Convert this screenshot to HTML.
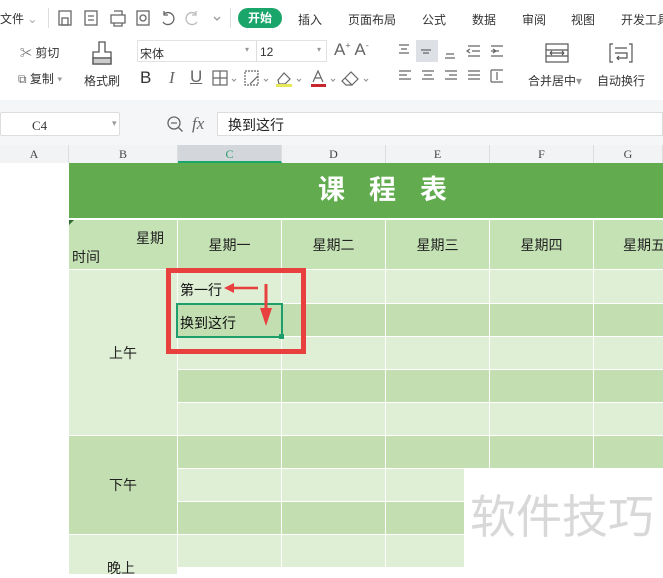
<!DOCTYPE html>
<html><head><meta charset="utf-8"><style>
*{margin:0;padding:0;box-sizing:border-box}
body{width:663px;height:567px;overflow:hidden;background:#fff;font-family:"Liberation Sans","Noto Sans CJK SC",sans-serif;position:relative;color:#333}
.a{position:absolute}
.t{font-size:12px;color:#333;white-space:nowrap}
.ic{position:absolute;font-size:15px;color:#666;white-space:nowrap;font-weight:300}
.cell{position:absolute;border-right:1px solid #fff;border-bottom:1px solid #fff}
.L{background:#deefd5}.D{background:#c3dfb1}.H{background:#c5e2b5}
.ch{position:absolute;top:145px;height:18px;font-family:"Liberation Serif","Noto Serif CJK SC",serif;font-size:12px;color:#444;text-align:center;line-height:18px;border-right:1px solid #ddd}
</style></head><body>
<!-- top menu -->
<div class="a t" style="left:0;top:10px;font-size:12px">文件 <span style="color:#aaa">⌄</span></div>
<div class="a" style="left:48px;top:8px;width:1px;height:20px;background:#ddd"></div>
<svg class="a" style="left:56px;top:8px" width="170" height="20" fill="none" stroke="#666" stroke-width="1.3">
<rect x="3" y="3" width="12" height="14"/><rect x="6" y="10" width="6" height="7"/>
<rect x="29" y="3" width="12" height="14"/><path d="M32 8h6M32 12h6"/>
<path d="M55 7h14v8H55zM58 3h8v4M58 15v3h8v-3"/>
<rect x="81" y="3" width="12" height="14"/><circle cx="87" cy="10" r="3"/>
<path d="M108 6a6 6 0 1 1 -1 8M108 3v4h4"/>
<path d="M140 6a6 6 0 1 0 1 8M140 3v4h-4" stroke="#bbb"/>
<path d="M158 9l3 3 3-3" stroke="#999"/>
</svg>
<div class="a" style="left:230px;top:8px;width:1px;height:20px;background:#ddd"></div>
<div class="a" style="left:238px;top:8px;width:44px;height:20px;border-radius:10px;background:#1aa56a;color:#fff;font-size:12px;font-weight:bold;text-align:center;line-height:20px">开始</div>
<div class="a t" style="left:298px;top:11px">插入</div>
<div class="a t" style="left:348px;top:11px">页面布局</div>
<div class="a t" style="left:422px;top:11px">公式</div>
<div class="a t" style="left:472px;top:11px">数据</div>
<div class="a t" style="left:522px;top:11px">审阅</div>
<div class="a t" style="left:571px;top:11px">视图</div>
<div class="a t" style="left:621px;top:11px">开发工具</div>
<!-- ribbon -->
<div class="a t" style="left:20px;top:44px"><span style="color:#666">✂</span> 剪切</div>
<div class="a t" style="left:18px;top:70px"><span style="color:#666">⧉</span> 复制 <span style="color:#999">▾</span></div>
<svg class="a" style="left:90px;top:40px" width="24" height="28" fill="none" stroke="#555" stroke-width="1.3"><path d="M9 2h6v10h6v12H3V12h6z"/><path d="M3 18h18" /><rect x="3" y="18" width="18" height="6" fill="#ccc" stroke="#555"/></svg>
<div class="a t" style="left:84px;top:72px">格式刷</div>
<div class="a" style="left:137px;top:40px;width:190px;height:22px;border:1px solid #e2e2e2;background:#fff"></div>
<div class="a t" style="left:140px;top:45px">宋体</div>
<div class="a t" style="left:260px;top:45px">12</div>
<div class="a t" style="left:245px;top:45px;font-size:8px;color:#999">▾</div>
<div class="a t" style="left:317px;top:45px;font-size:8px;color:#999">▾</div>
<div class="a" style="left:256px;top:41px;width:1px;height:20px;background:#ddd"></div>
<div class="ic" style="left:334px;top:40px;font-size:17px">A<sup style="font-size:9px">+</sup> A<sup style="font-size:9px">-</sup></div>
<div class="ic" style="left:140px;top:68px;font-size:17px"><b style="color:#333">B</b></div>
<div class="ic" style="left:169px;top:68px;font-size:17px;font-family:'Liberation Serif',serif"><i>I</i></div>
<div class="ic" style="left:190px;top:67px;font-size:17px"><u>U</u></div>
<svg class="a" style="left:212px;top:68px" width="170" height="22" fill="none" stroke="#666" stroke-width="1.2">
<rect x="1" y="3" width="14" height="14"/><path d="M8 3v14M1 10h14"/><path d="M20 11l2 2 2-2" stroke="#999"/>
<rect x="33" y="3" width="13" height="14" stroke-dasharray="2 1"/><path d="M38 16l8-8" /><path d="M52 11l2 2 2-2" stroke="#999"/>
<path d="M66 12l6-7 6 6-5 5h-6z"/><rect x="64" y="16" width="16" height="3" fill="#e7e75a" stroke="none"/><path d="M85 11l2 2 2-2" stroke="#999"/>
<path d="M101 14l5-11 5 11M103 10h6"/><rect x="99" y="16" width="15" height="3" fill="#c8272d" stroke="none"/><path d="M119 11l2 2 2-2" stroke="#999"/>
<path d="M133 10l6-6 7 7-6 6zM133 10l-3 3 4 4h6"/><path d="M152 11l2 2 2-2" stroke="#999"/>
</svg>
<div class="a" style="left:416px;top:40px;width:22px;height:22px;background:#dde0e4"></div>
<svg class="a" style="left:396px;top:42px" width="120" height="46" fill="none" stroke="#666" stroke-width="1.2">
<path d="M3 3h10M5 7h6M3 11h10" /><path d="M25 8h10M27 11h6" /><path d="M50 12h8M49 16h10"/><path d="M72 4h12M76 9h8M72 14h12M74 7l-3 2 3 2"/><path d="M95 4h12M95 9h8M95 14h12M97 7l3 2-3 2"/>
<path d="M3 29h12M3 33h8M3 37h12"/><path d="M26 29h12M28 33h8M26 37h12"/><path d="M49 29h12M53 33h8M49 37h12"/><path d="M72 29h12M72 33h12M72 37h12"/><path d="M95 28v12M95 28h12M95 40h12M101 30v8"/>
</svg>
<svg class="a" style="left:545px;top:43px" width="24" height="20" fill="none" stroke="#555" stroke-width="1.2"><rect x="1" y="1" width="22" height="18"/><path d="M1 7h22M1 13h22M5 10h14M5 10l2-2M5 10l2 2M19 10l-2-2M19 10l-2 2"/></svg>
<div class="a t" style="left:528px;top:72px">合并居中<span style="color:#999">▾</span></div>
<svg class="a" style="left:608px;top:42px" width="26" height="22" fill="none" stroke="#555" stroke-width="1.2"><path d="M5 2H2v18h3M21 2h3v18h-3M7 6h12M7 11h12v5H9M11 14l-2 2 2 2"/></svg>
<div class="a t" style="left:597px;top:72px">自动换行</div>
<div class="a" style="left:0;top:100px;width:663px;height:45px;background:#f5f6f7"></div>
<div class="a" style="left:0;top:112px;width:120px;height:24px;border:1px solid #ddd;background:#fff;border-radius:2px"></div>
<div class="a t" style="left:32px;top:118px;font-family:'Liberation Serif',serif;font-size:13px">C4</div>
<div class="a t" style="left:112px;top:118px;color:#999;font-size:9px">▾</div>
<svg class="a" style="left:166px;top:115px" width="20" height="20" fill="none" stroke="#666" stroke-width="1.3"><circle cx="8" cy="8" r="6"/><path d="M5 8h6M12.5 12.5l4 4"/></svg>
<div class="a t" style="left:192px;top:114px;font-size:17px;color:#666;font-family:'Liberation Serif',serif"><i>fx</i></div>
<div class="a" style="left:217px;top:112px;width:446px;height:24px;border:1px solid #ddd;background:#fff"></div>
<div class="a t" style="left:228px;top:115px;font-size:14px;color:#222">换到这行</div>
<!-- col headers -->
<div class="a" style="left:0;top:145px;width:663px;height:18px;background:#f2f3f4"></div>
<div class="ch" style="left:0;width:69px">A</div>
<div class="ch" style="left:69px;width:109px">B</div>
<div class="ch" style="left:178px;width:104px;background:#d3d7dc;color:#2a9a6a;border-bottom:2px solid #1aa56a">C</div>
<div class="ch" style="left:282px;width:104px">D</div>
<div class="ch" style="left:386px;width:104px">E</div>
<div class="ch" style="left:490px;width:104px">F</div>
<div class="ch" style="left:594px;width:69px">G</div>
<!-- title -->
<div class="a" style="left:69px;top:163px;width:594px;height:55px;background:#62ab4e"></div>
<div class="a" style="left:318px;top:163px;color:#fff;font-size:27px;font-weight:bold;line-height:55px;letter-spacing:24px;white-space:nowrap">课程表</div>
<div class="a" style="left:69px;top:218px;width:594px;height:2px;background:#fff"></div>
<!-- header row -->
<div class="cell H" style="left:69px;top:220px;width:109px;height:50px"></div>
<div class="a t" style="left:136px;top:228px;font-size:14px;color:#222">星期</div>
<div class="a t" style="left:72px;top:247px;font-size:14px;color:#222">时间</div>
<div class="a" style="left:69px;top:220px;width:0;height:0;border-top:5px solid #2d6a2d;border-right:5px solid transparent"></div>
<div class="cell H" style="left:178px;top:220px;width:104px;height:50px;text-align:center;line-height:50px;font-size:14px;color:#222">星期一</div>
<div class="cell H" style="left:282px;top:220px;width:104px;height:50px;text-align:center;line-height:50px;font-size:14px;color:#222">星期二</div>
<div class="cell H" style="left:386px;top:220px;width:104px;height:50px;text-align:center;line-height:50px;font-size:14px;color:#222">星期三</div>
<div class="cell H" style="left:490px;top:220px;width:104px;height:50px;text-align:center;line-height:50px;font-size:14px;color:#222">星期四</div>
<div class="cell H" style="left:594px;top:220px;width:104px;height:50px;line-height:50px;font-size:14px;color:#222;padding-left:29px">星期五</div>
<!-- B merged -->
<div class="cell L" style="left:69px;top:270px;width:109px;height:166px;text-align:center;line-height:166px;font-size:14px;color:#222">上午</div>
<div class="cell D" style="left:69px;top:436px;width:109px;height:99px;text-align:center;line-height:99px;font-size:14px;color:#222">下午</div>
<div class="cell L" style="left:69px;top:535px;width:109px;height:40px;font-size:14px;color:#222;padding:23px 0 0 38px">晚上</div>
<div id="g"></div>
<script>
var ys=[270,304,337,370,403,436,469,502,535,568],cl=['L','D','L','D','L','D','L','D','L'],xs=[178,282,386,490,594],h='';
for(var r=0;r<9;r++)for(var c=0;c<5;c++)h+='<div class="cell '+cl[r]+'" style="left:'+xs[c]+'px;top:'+ys[r]+'px;width:104px;height:'+(ys[r+1]-ys[r])+'px"></div>';
document.getElementById('g').innerHTML=h;
</script>
<div class="a t" style="left:180px;top:280px;font-size:14px;color:#111">第一行</div>
<div class="a" style="left:176px;top:303px;width:107px;height:35px;border:2px solid #1e9e6a"></div>
<div class="a" style="left:279px;top:334px;width:5px;height:5px;background:#1e9e6a"></div>
<div class="a t" style="left:180px;top:313px;font-size:14px;color:#111">换到这行</div>
<div class="a" style="left:166px;top:268px;width:140px;height:86px;border:5px solid #e8403f"></div>
<svg class="a" style="left:220px;top:278px" width="60" height="50"><path d="M38 10 L10 10" stroke="#e8403f" stroke-width="2.5"/><path d="M4 10 L14 5 L14 15Z" fill="#e8403f"/><path d="M46 6 L46 36" stroke="#e8403f" stroke-width="3"/><path d="M40 30 L46 48 L52 30Z" fill="#e8403f"/></svg>
<!-- watermark -->
<div class="a" style="left:464px;top:468px;width:199px;height:99px;background:#fff"></div>
<div class="a" style="left:470px;top:484px;font-size:46px;color:#d8d8d8;font-family:'Noto Sans CJK SC',sans-serif;white-space:nowrap;line-height:60px">软件技巧</div>
</body></html>
